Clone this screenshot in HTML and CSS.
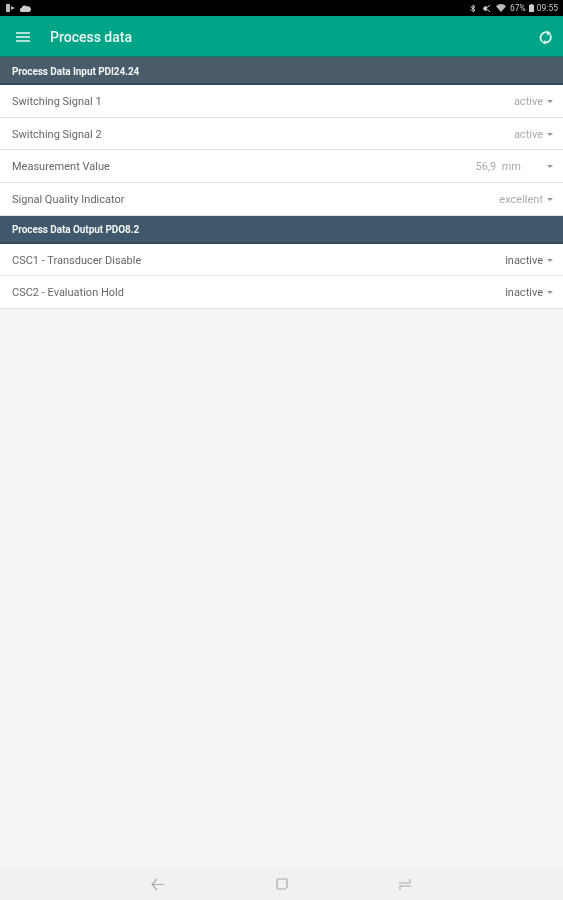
FILE: index.html
```
<!DOCTYPE html>
<html lang="en">
<head>
<meta charset="utf-8">
<title>Process data</title>
<link rel="stylesheet" href="styles.css">
</head>
<body>
<div class="screen">
  <div class="statusbar">
    <div class="status-left">
      <svg width="10" height="8" viewBox="0 0 10 8"><path d="M0 0h4v8H0zM5 2l4 2-4 2z" fill="#bbb"/></svg>
      <svg width="11" height="7" viewBox="0 0 11 7"><path d="M2 7a2 2 0 0 1-.3-4A3 3 0 0 1 7 1.6 2.7 2.7 0 0 1 9 7z" fill="#ccc"/></svg>
    </div>
    <div class="status-right">
      <svg class="bt" width="6" height="9" viewBox="0 0 6 9"><path d="M0.5 2.2 5 6.2 3 8V1l2 1.8L.5 6.800" fill="none" stroke="#ccc"/></svg>
      <svg class="mute" width="9" height="9" viewBox="0 0 9 9"><path d="M1 4.500 4 2v5zM4 4.500 8 1M4 4.500 8 8" fill="#ccc" stroke="#ccc"/></svg>
      <svg class="wifi" width="10" height="8" viewBox="0 0 10 8"><path d="M0 2.200a7 7 0 0 1 10 0L5 8z" fill="#bbb"/></svg>
      <span>67%</span>
      <svg width="5" height="8" viewBox="0 0 5 8"><path d="M0 1h1.500V0h2v1H5v7H0z" fill="#ccc"/></svg>
      <span>09:55</span>
    </div>
  </div>
  <header class="appbar">
    <svg class="menu" width="14" height="10" viewBox="0 0 14 10"><path d="M0 1h14M0 5h14M0 9h14" stroke="#e6f7f2" stroke-width="1.600"/></svg>
    <h1 class="title">Process data</h1>
    <svg class="refresh" width="14" height="15" viewBox="0 0 14 15"><path d="M3.200 11.600A5.400 5.400 0 0 1 9.500 3M11 4.400a5.400 5.400 0 0 1-5 8.200" fill="none" stroke="#e6f7f2" stroke-width="1.700"/><path d="M8.200 0.400 12 3.200 8 5.400zM6.600 10 3 12.400l3.600 2.200z" fill="#e6f7f2"/></svg>
  </header>
  <div class="section first">Process Data Input PDI24.24</div>
  <div class="row"><span class="label">Switching Signal 1</span><span class="value">active</span><i class="caret"></i></div>
  <div class="row"><span class="label">Switching Signal 2</span><span class="value">active</span><i class="caret"></i></div>
  <div class="row"><span class="label">Measurement Value</span><span class="value measure">56,9&nbsp; mm</span><i class="caret"></i></div>
  <div class="row"><span class="label">Signal Quality Indicator</span><span class="value">excellent</span><i class="caret"></i></div>
  <div class="section second">Process Data Output PDO8.2</div>
  <div class="row"><span class="label">CSC1 - Transducer Disable</span><span class="value dark">inactive</span><i class="caret"></i></div>
  <div class="row"><span class="label">CSC2 - Evaluation Hold</span><span class="value dark">inactive</span><i class="caret"></i></div>
  <div class="fill"></div>
  <nav class="navbar">
    <svg width="14" height="13" viewBox="0 0 14 13"><path d="M6 1 1 6.500 6 12M1 6.500h12" fill="none" stroke="#aaa" stroke-width="1.200"/></svg>
    <svg width="12" height="12" viewBox="0 0 12 12"><path d="M2 1h8l1 1v7l-2 2H2l-1-1V2z" fill="none" stroke="#aaa" stroke-width="1.200"/></svg>
    <svg width="14" height="13" viewBox="0 0 14 13"><path d="M1 5h11V1M13 8H2v4" fill="none" stroke="#aaa" stroke-width="1.200"/></svg>
  </nav>
</div>
</body>
</html>
```
FILE: styles.css
```
* { box-sizing: border-box; }
html, body { margin: 0; padding: 0; }
body { font-family: Roboto, "Liberation Sans", sans-serif; background: #f4f4f4; }
.screen { width: 563px; height: 900px; display: flex; flex-direction: column; background: #f4f4f4; overflow: hidden; filter: blur(0.45px); }
.statusbar { height: 16px; flex: none; background: #000; display: flex; justify-content: space-between; align-items: center; padding: 0 5px 0 6px; color: #c8c8c8; font-size: 8.5px; }
.status-left, .status-right { display: flex; align-items: center; gap: 4px; }
.status-right { gap: 3px; }
.status-right .bt { margin-right: 3px; }
.status-right .mute { margin-right: 2px; }
.status-right .wifi { margin-right: 1px; }
.appbar { height: 41px; flex: none; background: #00a587; display: flex; align-items: center; padding: 2px 10px 0 16px; border-bottom: 1px solid #0b7f6c; }
.title { margin: 0 0 0 20px; flex: 1; font-size: 14px; font-weight: 500; color: #e8f7f3; }
.section { height: 28px; flex: none; color: #f2f5f6; font-size: 10px; font-weight: 700; letter-spacing: -0.08px; display: flex; align-items: center; padding: 2px 12px 0; border-bottom: 2px solid #34495a; }
.section.first { background: #4a5b69; }
.section.second { background: #3f586b; }
.row { height: 32.700px; flex: none; background: #fff; display: flex; align-items: center; padding: 1px 10px 0 12px; border-bottom: 1px solid #e2e2e2; font-size: 11px; color: #666; }
.label { flex: 1; }
.value { color: #aaa; }
.value.measure { margin-right: 22px; }
.value.dark { color: #666; }
.caret { width: 0; height: 0; margin-left: 4px; border: 3.500px solid transparent; border-top-color: #999; border-bottom: 0; }
.fill { flex: 1; }
.navbar { height: 32px; flex: none; background: #f1f1f1; display: flex; align-items: center; padding: 0 151px; justify-content: space-between; }
```
